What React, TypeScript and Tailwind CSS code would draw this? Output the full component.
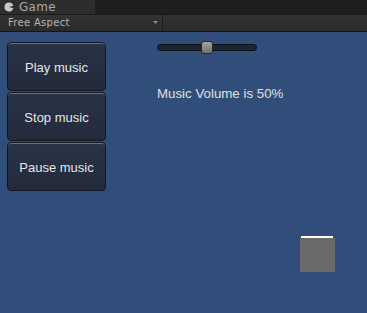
import React from "react";

function Btn({ label }: { label: string }) {
  return (
    <div className="h-[49px] w-[99px] rounded-[4px] border border-[#12161f] bg-gradient-to-b from-[#2a3246] to-[#222a3b] shadow-[inset_0_1px_0_#6b7180] flex items-center justify-center pt-[2px] text-[13px] text-[#e6e6e6]" style={{ fontFamily: '"Liberation Sans", Arial, sans-serif' }}>
      {label}
    </div>
  );
}

export default function App() {
  return (
    <div className="w-[367px] h-[313px] flex flex-col overflow-hidden bg-[#314d79]">
      <div className="h-[15px] flex bg-[#1f1f1f] border-b border-[#1a1a1a]">
        <div className="w-[95px] h-full bg-[#2d2d2d] flex items-center pl-[4px] gap-[5px] text-[12px] text-[#a8a8a8]" style={{ fontFamily: '"DejaVu Sans", sans-serif' }}>
          <svg width="10" height="10" viewBox="0 0 10 10">
            <path d="M5 0.5 A4.5 4.5 0 1 0 9.3 6.3 L5 5 L9.3 3.7 A4.5 4.5 0 0 0 5 0.5 Z" fill="#c8c8c8" />
          </svg>
          <span className="leading-none tracking-[0.3px]">Game</span>
        </div>
      </div>
      <div className="h-[17px] flex bg-gradient-to-b from-[#333333] to-[#2a2a2a] border-b border-[#151515]">
        <div className="w-[163px] h-full border-r border-[#1c1c1c] flex items-center justify-between pl-[8px] pr-[4px] text-[10px] text-[#b5b5b5]" style={{ fontFamily: '"DejaVu Sans", sans-serif' }}>
          <span className="leading-none tracking-[0.3px]">Free Aspect</span>
          <svg width="5" height="4" viewBox="0 0 5 4"><path d="M0 0 H5 L2.5 3 Z" fill="#8a8a8a" /></svg>
        </div>
      </div>
      <div className="relative flex-1 flex">
        <div className="flex flex-col pt-[10px] pl-[7px]">
          <Btn label="Play music" />
          <div className="h-[1px]" />
          <Btn label="Stop music" />
          <div className="h-[1px]" />
          <Btn label="Pause music" />
        </div>
        <div className="flex flex-col pl-[51px] pt-[9px]">
          <div className="relative w-[100px] h-[13px] flex items-center">
            <div className="w-full h-[7px] rounded-full bg-[#1e2535] border border-[#0c0f16]" />
            <div className="absolute left-[44px] top-0 w-[12px] h-[13px] rounded-[3px] border border-[#2a2a2a] bg-gradient-to-b from-[#a5a5a5] to-[#707070]" />
          </div>
          <div className="mt-[32px] text-[13.3px] leading-[15px] text-[#e0e0e0]" style={{ fontFamily: '"Liberation Sans", Arial, sans-serif' }}>
            Music Volume is 50%
          </div>
        </div>
        <div className="absolute left-[300px] top-[206px] w-[35px] h-[34px] bg-[#6a6a6a]">
          <div className="absolute left-[1px] right-[2px] top-[-2px] h-[2px] bg-white" />
        </div>
      </div>
    </div>
  );
}
